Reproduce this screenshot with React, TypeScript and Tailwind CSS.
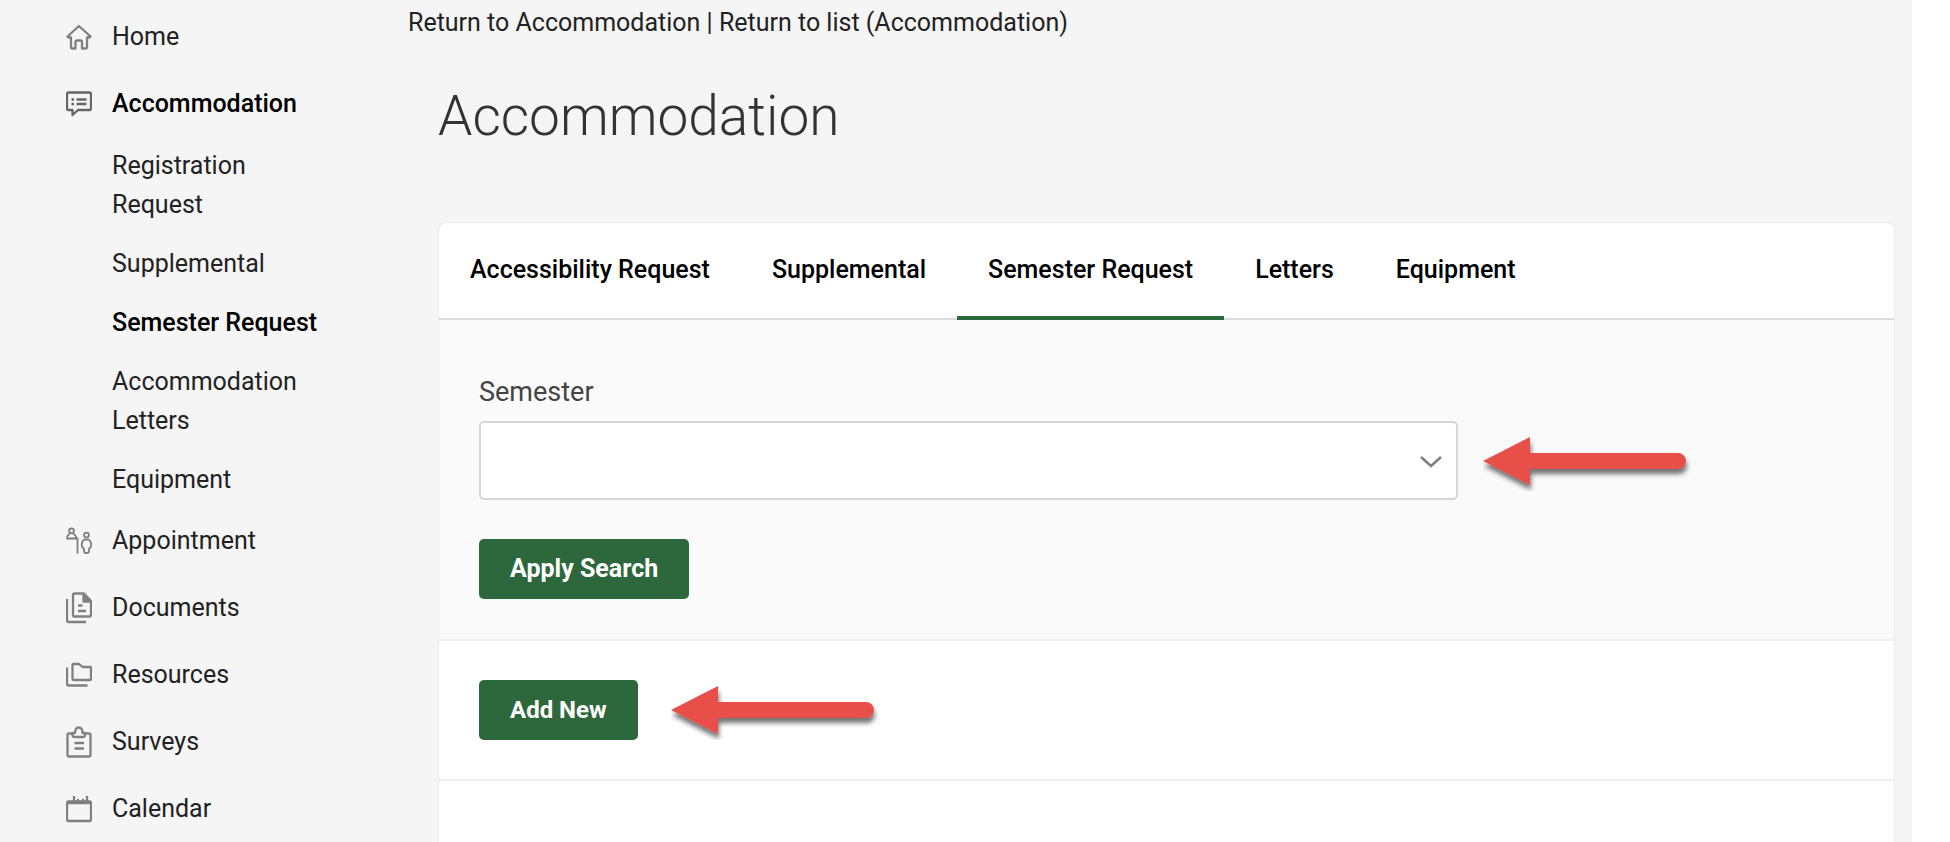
import type { ReactNode } from 'react';

const icons: Record<string, ReactNode> = {
  home: (
    <path d="M13 5 L1.5 15.5 L2.5 16.5 H5 V26 Q5 27.5 6.5 27.5 H9.5 V21 Q9.5 19.5 11 19.5 H14.5 Q16 19.5 16 21 V27.5 H19.5 Q21 27.5 21 26 V16.5 H23.5 L24.5 15.5 Z" />
  ),
  message: (
    <>
      <path d="M2.5 4.5 H23.5 Q25 4.5 25 6 V20.5 Q25 22 23.5 22 H12 L6.5 27 V22 H2.5 Q1 22 1 20.5 V6 Q1 4.5 2.5 4.5 Z" />
      <path d="M5.5 11.5 H8 M10.5 11.5 H20.5 M5.5 16 H8 M10.5 16 H20.5" />
    </>
  ),
  people: (
    <g strokeWidth="1.8">
      <circle cx="5.5" cy="5.8" r="2.4" />
      <path d="M4.5 8 Q1 10 1 13.5 H11.5 V28.5 M6.5 8 Q10 10 10.5 13.5" />
      <circle cx="20.5" cy="10" r="2.4" />
      <path d="M18.5 14.5 H22.5 Q25.3 16 25.3 20 Q25.3 22.5 23 23.5 V26 Q23 28 21 28 H20 Q18 28 18 26 V23.5 Q15.7 22.5 15.7 20 Q15.7 16 18.5 14.5 Z" />
    </g>
  ),
  documents: (
    <>
      <path d="M8.5 1.5 H18 L25 9 V23 Q25 24.5 23.5 24.5 H8.5 Q7 24.5 7 23 V3 Q7 1.5 8.5 1.5 Z" />
      <path d="M17.5 2 V9.5 H24.5 Z" fill="currentColor" />
      <path d="M12 13.5 H16.5 M12 19 H20 M1 7 V28.5 Q1 30 2.5 30 H20" />
    </>
  ),
  folders: (
    <path d="M7.5 5 H13 L16.5 8 H24 Q25 8 25 9 V20 Q25 21 24 21 H7.5 Q6.5 21 6.5 20 V6 Q6.5 5 7.5 5 Z M1 8.5 V25 Q1 26.5 2.5 26.5 H21.5" />
  ),
  clipboard: (
    <>
      <path d="M6.5 7.5 H3 Q1.5 7.5 1.5 9 V29 Q1.5 30.5 3 30.5 H23 Q24.5 30.5 24.5 29 V9 Q24.5 7.5 23 7.5 H19" />
      <path d="M6.5 7 H9 Q9 1.5 12.8 1.5 Q16.5 1.5 16.5 7 H19 V9 Q19 11 17 11 H8.5 Q6.5 11 6.5 9 Z M8.5 17 H18 M8.5 22.5 H18" />
    </>
  ),
  calendar: (
    <>
      <path d="M2.5 8.5 H23.5 Q25 8.5 25 10 V26.5 Q25 28 23.5 28 H2.5 Q1 28 1 26.5 V10 Q1 8.5 2.5 8.5 Z" />
      <path d="M1 9.5 H25" strokeWidth="3.5" />
      <path d="M8 3 V9 M21 3 V9" />
      <path d="M11 7 H13 M16 7 H18" />
    </>
  ),
};

type Item = { label: string; icon: string; active?: boolean; children?: string[] };

const items: Item[] = [
  { label: 'Home', icon: 'home' },
  {
    label: 'Accommodation',
    icon: 'message',
    active: true,
    children: ['Registration Request', 'Supplemental', 'Semester Request', 'Accommodation Letters', 'Equipment'],
  },
  { label: 'Appointment', icon: 'people' },
  { label: 'Documents', icon: 'documents' },
  { label: 'Resources', icon: 'folders' },
  { label: 'Surveys', icon: 'clipboard' },
  { label: 'Calendar', icon: 'calendar' },
];

const tabs = ['Accessibility Request', 'Supplemental', 'Semester Request', 'Letters', 'Equipment'];
const current = 'Semester Request';

function Icon({ name, active }: { name: string; active?: boolean }) {
  return (
    <svg
      viewBox="0 0 26 32"
      className={active ? 'h-8 w-[26px] shrink-0 text-[#666]' : 'h-8 w-[26px] shrink-0 text-[#808080]'}
      fill="none"
      stroke="currentColor"
      strokeWidth="2.3"
      strokeLinejoin="round"
      aria-hidden="true"
    >
      {icons[name]}
    </svg>
  );
}

function Sidebar() {
  return (
    <nav className="w-[408px] shrink-0 pt-[3px] pr-20 pl-[66px] text-[25px] leading-[39px]">
      <ul>
        {items.map((item) => (
          <li key={item.label}>
            <a href="#" className="flex items-center gap-5 py-[14px]">
              <Icon name={item.icon} active={item.active} />
              <span className={item.active ? 'font-medium text-black' : ''}>{item.label}</span>
            </a>
            {item.children && (
              <ul className="flex flex-col gap-5 pt-[9px] pb-2 pl-[46px]">
                {item.children.map((child) => (
                  <li key={child}>
                    <a href="#" className={child === current ? 'block font-medium text-black' : 'block'}>
                      {child}
                    </a>
                  </li>
                ))}
              </ul>
            )}
          </li>
        ))}
      </ul>
    </nav>
  );
}

function Arrow() {
  return (
    <svg viewBox="0 0 208 60" className="h-[60px] w-[208px] shrink-0" aria-hidden="true">
      <defs>
        <filter id="arrow-shadow" x="-5%" y="-20%" width="115%" height="150%">
          <feDropShadow dx="1" dy="5" stdDeviation="2.5" floodColor="#000" floodOpacity="0.55" />
        </filter>
      </defs>
      <path
        d="M0 30 L47 6 V22 H195 A8 8 0 0 1 195 38 H47 V54 Z"
        fill="#e8504a"
        filter="url(#arrow-shadow)"
      />
    </svg>
  );
}

export default function App() {
  return (
    <div className="min-h-screen bg-white pr-[38px] font-[Roboto,sans-serif] text-[#222]">
      <div className="flex min-h-screen bg-[#f5f5f5]">
        <Sidebar />
        <main className="flex min-w-0 flex-1 flex-col pt-[7px] pr-[17px]">
          <p className="text-[25px] leading-8">
            <a href="#">Return to Accommodation</a> | <a href="#">Return to list (Accommodation)</a>
          </p>
          <h1 className="mt-[45px] ml-[30px] text-[55px] leading-[64px] font-light text-[#333]">Accommodation</h1>

          <div className="mt-[74px] ml-[30px] flex-1 rounded-t-lg border border-b-0 border-[#ebebeb] bg-white">
            <div className="flex h-[97px] border-b-2 border-[#dcdcdc]">
              {tabs.map((tab) => (
                <a
                  key={tab}
                  href="#"
                  className={
                    tab === current
                      ? 'flex h-[97px] items-center border-b-4 border-[#2d683c] px-[31px] text-[25px] font-medium text-black'
                      : 'flex h-[97px] items-center border-b-4 border-transparent px-[31px] text-[25px] font-medium text-black'
                  }
                >
                  {tab}
                </a>
              ))}
            </div>

            <form className="border-b-2 border-[#f0f0f0] bg-[#fafafa] px-10 pt-14 pb-10">
              <label htmlFor="semester" className="block text-[27px] leading-8 text-[#444]">
                Semester
              </label>
              <div className="mt-[13px] mr-[163px] flex items-center gap-[25px]">
                <div className="relative flex-1">
                  <select
                    id="semester"
                    className="block h-[79px] w-full appearance-none rounded-[5px] border-2 border-[#d6d6d6] bg-white px-5 text-[25px]"
                  >
                    <option></option>
                  </select>
                  <svg
                    viewBox="0 0 22 12"
                    className="pointer-events-none absolute top-[35px] right-4 h-3 w-[22px]"
                    fill="none"
                    stroke="#808080"
                    strokeWidth="2.5"
                    aria-hidden="true"
                  >
                    <path d="M1 1 L11 10 L21 1" />
                  </svg>
                </div>
                <Arrow />
              </div>
              <button
                type="button"
                className="mt-[39px] block h-[60px] rounded-[5px] bg-[#2d683c] px-[31px] text-[25px] font-bold text-white"
              >
                Apply Search
              </button>
            </form>

            <div className="flex items-center gap-[33px] border-b-2 border-[#f0f0f0] px-10 py-[39px]">
              <button
                type="button"
                className="h-[60px] shrink-0 rounded-[5px] bg-[#2d683c] px-[31px] text-[24px] font-bold text-white"
              >
                Add New
              </button>
              <Arrow />
            </div>
          </div>
        </main>
      </div>
    </div>
  );
}
